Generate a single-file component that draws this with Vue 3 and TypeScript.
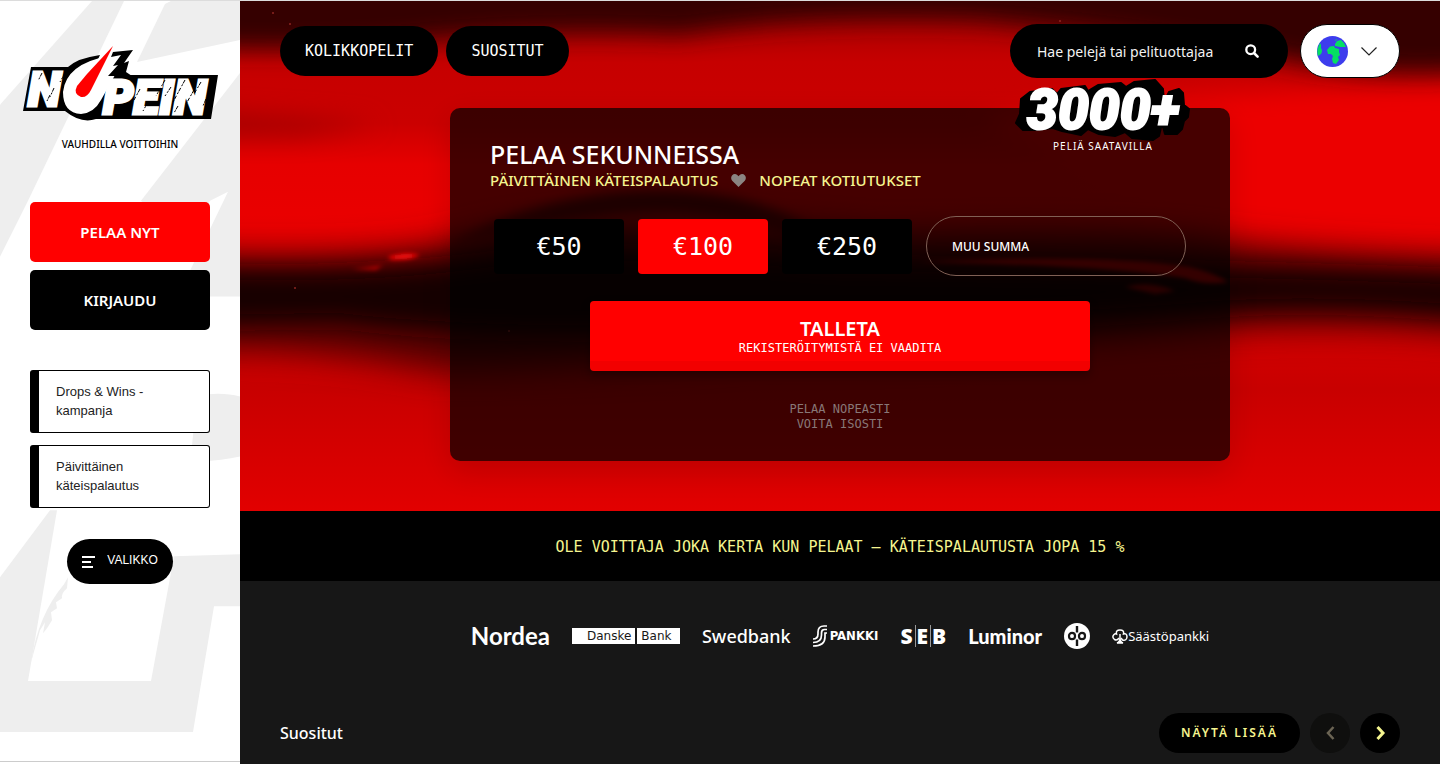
<script setup lang="ts">
import { ref } from 'vue'

const navLinks: string[] = ['KOLIKKOPELIT', 'SUOSITUT']
const campaigns: string[] = ['Drops & Wins -kampanja', 'Päivittäinen käteispalautus']
const amounts: number[] = [50, 100, 250]
const selected = ref<number>(100)
const search = ref<string>('')
const customAmount = ref<string>('')
</script>

<template>
  <div class="page">
    <aside class="sidebar">
      <svg class="side-art" viewBox="0 0 240 764" preserveAspectRatio="none" aria-hidden="true">
        <g fill="#eeeeee">
          <path d="M92 0H124L28 200L0 256V104Z" />
          <path d="M171 0H240V39L137 61L165 3Z" />
          <path d="M240 72L141 200L190 240L210 200L228 191L190 270L188 296H240Z" />
          <path d="M197 395Q222 391 240 396V456Q222 460 200 461L192 445Z" />
          <path d="M50 510H57L28 681H151L174 556L240 554V606H214L193 732H0V577Z" />
          <path d="M68 577L67 588Q61 593 62 598L56 602L57 608L51 612L52 620L47 628L43 633L45 622L40 630L31 662Q38 615 64 584Z" />
        </g>
      </svg>

      <a class="brand" href="#" aria-label="Nopein">
        <svg width="200" height="80" viewBox="0 0 200 80">
          <path d="M11 23H48Q58 14 80 11L74 24L88 32L108 31H198L191 75H76Q61 80 45 67H3Z" fill="#000" />
          <g class="logo-type" fill="#fff" stroke="#fff" stroke-width="3">
            <text x="8" y="62">N</text>
            <text x="83" y="70">PEIN</text>
          </g>
          <path d="M88 12Q46 20 43 48Q43 69 61 70Q74 69 81 56L95 31L98 22Z" fill="#fff" />
          <path d="M93 2L71 46Q67 54 61 53Q53 50 57 42L67 30Z" fill="#f00" />
          <path d="M93 8L113 6L104 19L109 17L106 28L112 32H88L98 21L93 22L101 11L91 13Z" fill="#000" />
          <path d="M22 29l-4 8M45 29l-5 9M34 44l-4 9M30 51l-3 6M145 36l-9 16M165 36l-12 22M151 43l-6 9M174 46l-8 14M181 38l-7 12M158 62l-4 7M120 45l-6 11M128 58l-5 9M186 55l-3 7" stroke="#000" stroke-width="1" stroke-dasharray="4 1 2 2" />
        </svg>
      </a>
      <p class="tagline">VAUHDILLA VOITTOIHIN</p>

      <div class="cta">
        <button class="cta-btn play" type="button">PELAA NYT</button>
        <button class="cta-btn login" type="button">KIRJAUDU</button>
      </div>

      <nav class="campaigns" aria-label="Kampanjat">
        <a v-for="c in campaigns" :key="c" href="#" class="campaign">{{ c }}</a>
      </nav>

      <button class="menu" type="button">
        <svg width="13" height="12" viewBox="0 0 13 12" aria-hidden="true"><path d="M0 1H13M0 6H9M0 11H11" stroke="#fff" stroke-width="2" /></svg>
        <span>VALIKKO</span>
      </button>
    </aside>

    <main class="main">
      <section class="hero">
        <svg class="hero-art" viewBox="0 0 1200 510" preserveAspectRatio="none" aria-hidden="true">
          <defs>
            <linearGradient id="base" x1="0" y1="0" x2="0" y2="1">
              <stop offset="0" stop-color="#a00000" />
              <stop offset=".12" stop-color="#c60000" />
              <stop offset=".24" stop-color="#cb0000" />
              <stop offset=".32" stop-color="#e60000" />
              <stop offset=".44" stop-color="#ea0000" />
              <stop offset=".76" stop-color="#c80000" />
              <stop offset="1" stop-color="#e20000" />
            </linearGradient>
            <filter id="soft" x="-10%" y="-60%" width="120%" height="220%"><feGaussianBlur stdDeviation="12" /></filter>
            <filter id="patch" x="-50%" y="-200%" width="200%" height="500%"><feGaussianBlur stdDeviation="12" /></filter>
            <filter id="wide" x="-20%" y="-50%" width="140%" height="200%"><feGaussianBlur stdDeviation="16" /></filter>
            <filter id="hood" x="-20%" y="-80%" width="140%" height="260%"><feGaussianBlur stdDeviation="6" /></filter>
            <filter id="fine" x="-20%" y="-80%" width="140%" height="260%"><feGaussianBlur stdDeviation="2" /></filter>
          </defs>
          <rect width="1200" height="510" fill="url(#base)" />
          <path d="M740 120Q900 90 1240 84V240H980Z" fill="#ec0000" filter="url(#soft)" />
          <path d="M-40 -40H1240V70Q1130 78 1040 58Q900 34 740 20Q560 14 440 34Q330 28 200 38Q90 52 -40 46Z" fill="#340000" filter="url(#soft)" />
          <path d="M-40 112Q60 116 140 124L60 134H-40Z" fill="#a00000" filter="url(#patch)" />
          <path d="M-40 252Q140 258 210 240Q300 214 400 222Q540 220 640 232Q860 226 960 236Q1040 250 1240 256V334Q1100 322 980 330Q760 350 540 352Q300 372 190 370Q80 348 -40 350Z" fill="#550000" filter="url(#wide)" />
          <path d="M210 244Q290 198 390 190Q500 184 570 226Q600 240 560 240Q470 206 380 214Q300 222 210 244Z" fill="#600000" filter="url(#hood)" />
          <path d="M-40 270Q140 276 280 254Q420 246 600 262Q900 264 1240 276V314Q1060 298 930 312Q700 328 500 330Q240 338 100 320L-40 322Z" fill="#180000" filter="url(#soft)" />
          <path d="M680 261Q860 252 950 266Q975 272 988 281Q965 285 945 277Q860 264 680 261Z" fill="#b00000" filter="url(#fine)" />
          <path d="M885 286Q910 279 935 290L915 293Z" fill="#8c0000" filter="url(#fine)" />
          <path d="M148 256Q166 250 180 254Q168 260 150 258Z" fill="#ff0808" filter="url(#fine)" />
          <path d="M112 268L143 264L136 269Z" fill="#b00000" filter="url(#fine)" />
          <g fill="#8d2420"><circle cx="33" cy="12" r="1" /><circle cx="50" cy="23" r="1" /><circle cx="820" cy="20" r="1" /><circle cx="55" cy="287" r="1" /><circle cx="269" cy="330" r="1" /></g>
        </svg>

        <header class="topbar">
          <nav class="topnav" aria-label="Pelit">
            <a v-for="l in navLinks" :key="l" href="#" class="pill">{{ l }}</a>
          </nav>
          <div class="tools">
            <form class="search" role="search" @submit.prevent>
              <input v-model="search" type="text" aria-label="Hae pelejä" placeholder="Hae pelejä tai pelituottajaa" />
              <button type="submit" aria-label="Hae">
                <svg width="14" height="14" viewBox="0 0 14 14"><circle cx="5.7" cy="5.7" r="4.4" fill="none" stroke="#fff" stroke-width="2.3" /><path d="M9 9L12.6 12.6" stroke="#fff" stroke-width="2.6" stroke-linecap="round" /></svg>
              </button>
            </form>
            <button class="lang" type="button" aria-label="Kieli">
              <svg width="31" height="31" viewBox="0 0 31 31">
                <circle cx="15.5" cy="15.5" r="15.5" fill="#3d3ded" />
                <path d="M3 7Q5 9 4 12Q6 15 4 18L1 20Q-1 14 3 7ZM10 14L13 10.500L17 10L18 12L22 13V16L23 19L21 21L22 24L19 28L16 27L15 23L16 20L14 18L11 18ZM18 4L20 3L19 5ZM18 8L20 5L24 4Q28 7 29 11L23 11L18 10Z" fill="#05df62" />
              </svg>
              <svg width="16" height="9" viewBox="0 0 16 9"><path d="M.5 .5L8 8L15.5 .5" fill="none" stroke="#222" stroke-width="1.2" /></svg>
            </button>
          </div>
        </header>

        <div class="card">
          <div class="badge">
            <svg width="174" height="60" viewBox="0 0 174 60" role="img" aria-label="3000+">
              <path d="M5 19L14 12L36 9L41 14L45 9L69 6L72 11L82 5L105 3L110 7L118 2L139 0L147 9L148 22L153 12L163 9L167 13L168 25L173 29L172 37L168 41L166 49L161 54L149 54L146 43L143 56L137 60L116 58L109 52L99 56L83 54L72 49L65 55L46 51L37 48L19 50L7 50L0 43L4 34Z" fill="#000" stroke="#000" stroke-width="2" stroke-linejoin="round" />
              <text class="badge-num" x="11" y="49" fill="#fff" stroke="#fff" stroke-width="2">3000+</text>
            </svg>
            <span>PELIÄ SAATAVILLA</span>
          </div>

          <h1>PELAA SEKUNNEISSA</h1>
          <p class="perks">
            <span>PÄIVITTÄINEN KÄTEISPALAUTUS</span>
            <svg width="15" height="13" viewBox="0 0 15 13" aria-hidden="true"><path d="M7.5 13L1.2 6.8Q-.8 4 1 1.5Q3.5-1 6.3 1L7.5 2.2L8.7 1Q11.5-1 14 1.5Q15.8 4 13.8 6.8Z" fill="#8b8582" /></svg>
            <span>NOPEAT KOTIUTUKSET</span>
          </p>

          <form @submit.prevent>
            <div class="amounts">
              <button v-for="a in amounts" :key="a" type="button" class="amount" :class="{ active: a === selected }" :aria-pressed="a === selected" @click="selected = a">€{{ a }}</button>
              <input v-model="customAmount" class="custom" type="text" aria-label="Muu summa" placeholder="MUU SUMMA" />
            </div>
            <button class="deposit" type="submit">
              <strong>TALLETA</strong>
              <span>REKISTERÖITYMISTÄ EI VAADITA</span>
            </button>
          </form>
          <p class="slogan">PELAA NOPEASTI<br />VOITA ISOSTI</p>
        </div>
      </section>

      <p class="strip">OLE VOITTAJA JOKA KERTA KUN PELAAT – KÄTEISPALAUTUSTA JOPA 15 %</p>

      <section class="banks" aria-label="Pankit">
        <span class="nordea">Nordea</span>
        <span class="danske"><span>Danske</span><span>Bank</span></span>
        <span class="swed">Swedbank</span>
        <span class="spankki">
          <svg width="14" height="22" viewBox="0 0 14 22" aria-hidden="true"><g fill="none" stroke="#fff" stroke-width="1.7"><path d="M14 1H11Q5 1 5 7V9Q5 14 0 14" /><path d="M14 4.5H11.5Q8.5 4.5 8.5 8V10Q8.5 17.5 0 17.5" /><path d="M14 8H12V12Q12 21 0 21" /></g></svg>
          <span>PANKKI</span>
        </span>
        <span class="seb"><span>S</span><span>E</span><span>B</span></span>
        <span class="luminor">Luminor</span>
        <svg class="op" width="26" height="26" viewBox="0 0 26 26" role="img" aria-label="OP">
          <circle cx="13" cy="13" r="13" fill="#fff" />
          <path d="M13 3V9.5M13 16.5V23" stroke="#171717" stroke-width="2.4" />
          <rect x="5" y="9.8" width="6" height="6.4" rx="3" fill="none" stroke="#171717" stroke-width="2.2" />
          <rect x="15" y="9.8" width="6" height="6.4" rx="3" fill="none" stroke="#171717" stroke-width="2.2" />
        </svg>
        <span class="saasto">
          <svg width="16" height="15" viewBox="0 0 16 15" aria-hidden="true"><path d="M7 9Q5 12 2.5 10.5Q-.5 8 2 5.5Q3 4.5 4.5 5Q3.5 1 8 1Q12.5 1 11.5 5Q15 4 15 8Q14.5 12 10.5 11L9 9" fill="none" stroke="#fff" stroke-width="1.5" /><path d="M8 5V11M5 14Q8 13 8 9Q8 13 11 14Z" stroke="#fff" stroke-width="1.5" fill="#fff" /></svg>
          <span>Säästöpankki</span>
        </span>
      </section>

      <section class="games">
        <h2>Suositut</h2>
        <div class="controls">
          <a class="more" href="#">NÄYTÄ LISÄÄ</a>
          <button class="arrow off" type="button" aria-label="Edellinen" disabled>
            <svg width="9" height="14" viewBox="0 0 9 14"><path d="M7.5 1L2 7L7.5 13" fill="none" stroke="currentColor" stroke-width="2.5" /></svg>
          </button>
          <button class="arrow" type="button" aria-label="Seuraava">
            <svg width="9" height="14" viewBox="0 0 9 14"><path d="M1.5 1L7 7L1.5 13" fill="none" stroke="currentColor" stroke-width="3" /></svg>
          </button>
        </div>
      </section>
    </main>
  </div>
</template>

<style>
body {
  margin: 0;
  background: #171717;
}
</style>

<style scoped>
.page {
  --sans: "Noto Sans", "Open Sans", sans-serif;
  --mono: "DejaVu Sans Mono", "Liberation Mono", monospace;
  box-sizing: border-box;
  display: flex;
  min-height: 100vh;
  border-top: 1px solid #dcdcdc;
  background: #171717;
  color: #fff;
  font-family: var(--sans);
}
.page * { box-sizing: border-box; }
a { color: inherit; text-decoration: none; }
button, input { border: 0; font: inherit; color: inherit; cursor: pointer; }
h1, h2, p { margin: 0; }
svg { display: block; flex: none; overflow: visible; }

.sidebar {
  position: relative;
  flex: 0 0 240px;
  display: flex;
  flex-direction: column;
  align-items: center;
  padding: 43px 20px 30px;
  background: #fff;
  color: #000;
}
.sidebar > :not(.side-art) { position: relative; }
.sidebar::after {
  content: "";
  position: absolute;
  inset: auto 0 2px;
  border-bottom: 1px solid #ccc;
}
.side-art { position: absolute; inset: 0; width: 100%; height: 100%; }
.logo-type { font: italic 900 48px Roboto, sans-serif; }
.tagline { margin-top: 13px; font-size: 10px; line-height: 14px; font-weight: 500; }
.cta, .campaigns { display: flex; flex-direction: column; width: 180px; }
.cta { gap: 8px; margin-top: 51px; }
.cta-btn { height: 60px; border-radius: 5px; color: #fff; font-size: 15px; font-weight: 600; }
.play { background: #f00; }
.login { background: #000; }
.campaigns { gap: 12px; margin-top: 40px; }
.campaign {
  padding: 11px 40px 12px 17px;
  border: 1px solid #000;
  border-left-width: 9px;
  border-radius: 3px;
  background: #fff;
  color: #222;
  font: 13px/19px "Liberation Sans", Arial, sans-serif;
}
.menu {
  display: flex;
  align-items: center;
  gap: 12px;
  height: 45px;
  margin-top: 31px;
  padding: 0 15px;
  border-radius: 23px;
  background: #000;
  color: #fff;
  font: 12px/16px "Liberation Sans", Arial, sans-serif;
}
.menu span { padding-bottom: 4px; }

.main { flex: 1; min-width: 0; }
.hero { position: relative; padding: 23px 40px 50px; overflow: hidden; }
.hero-art { position: absolute; inset: 0; width: 100%; height: 100%; }
.topbar { position: relative; display: flex; justify-content: space-between; align-items: center; }
.topnav { display: flex; gap: 8px; }
.pill {
  padding: 0 25px;
  border-radius: 25px;
  background: #000;
  font: 15px/50px var(--mono);
}
.tools { display: flex; gap: 12px; }
.search {
  display: flex;
  align-items: center;
  width: 278px;
  height: 54px;
  padding: 0 29px 0 27px;
  border-radius: 27px;
  background: #000;
}
.search input { flex: 1; min-width: 0; padding: 0; background: none; font-size: 14px; outline: 0; }
.search input::placeholder { color: #f2f2f2; opacity: 1; }
.search button { padding: 0; background: none; }
.lang {
  display: flex;
  align-items: center;
  gap: 13px;
  width: 100px;
  height: 54px;
  padding: 0 16px;
  border: 1px solid #000;
  border-radius: 27px;
  background: #fff;
}

.card {
  position: relative;
  max-width: 780px;
  margin: 30px auto 0;
  padding: 30px 40px 29px;
  border-radius: 10px;
  background: rgba(0, 0, 0, .7);
  box-shadow: 0 10px 30px rgba(0, 0, 0, .12);
}
.badge {
  position: absolute;
  top: -28px;
  right: 40px;
  display: flex;
  flex-direction: column;
  align-items: center;
  font-size: 10px;
  line-height: 12px;
  letter-spacing: 1px;
}
.badge-num { font: italic 900 55px Roboto, sans-serif; letter-spacing: 0; }
.card h1 { font-size: 25px; line-height: 32px; font-weight: 500; }
.perks { display: flex; align-items: center; gap: 13px; color: #f5f58f; font-size: 15px; line-height: 20px; font-weight: 500; }
.amounts { display: flex; align-items: center; gap: 14px; margin: 26px 4px 0; }
.amount {
  flex: 0 1 130px;
  height: 55px;
  padding: 0;
  border-radius: 4px;
  background: #000;
  font: 25px/55px var(--mono);
}
.amount.active { background: #f00; }
.custom {
  flex: 0 1 260px;
  min-width: 0;
  height: 60px;
  padding: 0 25px;
  border: 1px solid #806055;
  border-radius: 30px;
  background: none;
  font-size: 12px;
  font-weight: 500;
}
.custom::placeholder { color: #fff; opacity: 1; }
.deposit {
  display: flex;
  flex-direction: column;
  align-items: center;
  justify-content: center;
  width: 500px;
  max-width: 100%;
  height: 70px;
  margin: 25px auto 0;
  padding: 0;
  border-radius: 4px;
  background: linear-gradient(#f00 60px, #f20000 60px);
  box-shadow: 0 4px 10px rgba(0, 0, 0, .3);
}
.deposit strong { font-size: 20px; line-height: 24px; font-weight: 600; }
.deposit span { font: 12px/15px var(--mono); }
.slogan { margin-top: 31px; color: #877; text-align: center; font: 12px/15px var(--mono); }

.strip {
  padding: 2px 20px 0;
  background: #000;
  color: #f5f58f;
  text-align: center;
  font: 15px/68px var(--mono);
}
.banks { display: flex; align-items: center; justify-content: center; gap: 22px; height: 110px; line-height: 26px; }
.nordea { font: 700 24px/26px Lato, sans-serif; }
.danske { display: flex; width: 108px; height: 16px; padding-left: 15px; background: #fff; color: #171717; font: 12px/16px "DejaVu Sans", sans-serif; }
.danske span { padding-right: 4px; }
.danske span + span { padding-left: 4px; border-left: 2px solid #171717; }
.swed { font-size: 18px; font-weight: 500; }
.spankki { display: flex; align-items: center; gap: 3px; font: 700 13px/22px "DejaVu Sans Condensed", "Noto Sans", sans-serif; }
.seb { display: flex; gap: 2px; font: 900 21px/22px "Noto Sans", sans-serif; }
.seb span + span { padding-left: 1px; border-left: 1px solid #999; }
.luminor { font: 900 20px/26px Lato, sans-serif; }
.saasto { display: flex; align-items: center; font-size: 13px; line-height: 16px; }

.games { display: flex; align-items: center; justify-content: space-between; padding: 22px 40px 10px; }
.games h2 { font-size: 16px; line-height: 24px; font-weight: 500; }
.controls { display: flex; align-items: center; gap: 10px; color: #f5f58f; }
.more { padding: 0 22px; border-radius: 20px; background: #000; font-size: 12px; line-height: 40px; font-weight: 600; letter-spacing: 2px; }
.arrow { display: flex; align-items: center; justify-content: center; width: 40px; height: 40px; padding: 0; border-radius: 50%; background: #000; color: #f5f58f; }
.arrow.off { background: #0f0f0e; color: #6b6454; }
</style>
